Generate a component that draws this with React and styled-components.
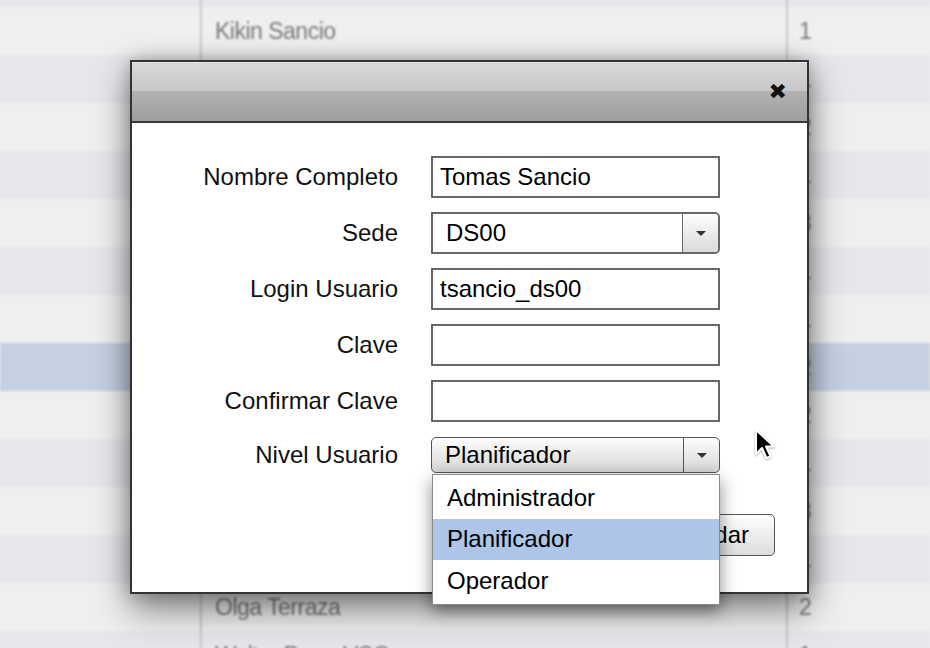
import React from 'react';
import styled, { createGlobalStyle } from 'styled-components';

const GlobalStyle = createGlobalStyle`
  html, body {
    margin: 0;
    padding: 0;
    background: #efefef;
  }
  * {
    box-sizing: border-box;
  }
  body {
    font-family: "Liberation Sans", Arial, Helvetica, sans-serif;
  }
`;

const rows = [
  { name: '', num: '' },
  { name: 'Kikin Sancio', num: '1' },
  { name: 'Ana Beltran', num: '1' },
  { name: 'Carlos Rivas', num: '2' },
  { name: 'Diego Torres', num: '1' },
  { name: 'Elena Campos', num: '3' },
  { name: 'Fabian Mejia', num: '1' },
  { name: 'Gloria Paz', num: '1' },
  { name: 'Tomas Sancio', num: '2', selected: true },
  { name: 'Hugo Salas', num: '2' },
  { name: 'Ines Rojas', num: '1' },
  { name: 'Jorge Vera', num: '3' },
  { name: 'Luis Ortega', num: '1' },
  { name: 'Olga Terraza', num: '2' },
  { name: 'Walter Parra VSC', num: '1' },
];

const fields = [
  { label: 'Nombre Completo', kind: 'input', value: 'Tomas Sancio' },
  { label: 'Sede', kind: 'combo', value: 'DS00' },
  { label: 'Login Usuario', kind: 'input', value: 'tsancio_ds00' },
  { label: 'Clave', kind: 'input', value: '' },
  { label: 'Confirmar Clave', kind: 'input', value: '' },
];

const niveles = ['Administrador', 'Planificador', 'Operador'];

const Arrow = () => (
  <svg width="10" height="5" viewBox="0 0 10 5">
    <path d="M0 0 H10 L5 5 Z" fill="#333" />
  </svg>
);

const App = () => (
  <Screen>
    <GlobalStyle />
    <Table>
      {rows.map((r, i) => (
        <Row key={i} $alt={i % 2 === 0} $selected={r.selected}>
          <Cell $w={202} />
          <Cell $w={586}>{r.name}</Cell>
          <Cell $w={142} $last>
            {r.num}
          </Cell>
        </Row>
      ))}
    </Table>

    <Dialog>
      <Header>
        <Close>✖</Close>
      </Header>
      <Body>
        <Form>
          {fields.map((f) => (
            <React.Fragment key={f.label}>
              <Label>{f.label}</Label>
              {f.kind === 'input' ? (
                <TextBox>{f.value}</TextBox>
              ) : (
                <Combo>
                  <ComboText>{f.value}</ComboText>
                  <ComboButton>
                    <Arrow />
                  </ComboButton>
                </Combo>
              )}
            </React.Fragment>
          ))}
          <Label>Nivel Usuario</Label>
          <SelectWrap>
            <Select>
              <SelectText>Planificador</SelectText>
              <SelectButton>
                <Arrow />
              </SelectButton>
            </Select>
            <Menu>
              {niveles.map((n) => (
                <MenuItem key={n} $active={n === 'Planificador'}>
                  {n}
                </MenuItem>
              ))}
            </Menu>
          </SelectWrap>
        </Form>
        <Actions>
          <Button>Guardar</Button>
        </Actions>
      </Body>
    </Dialog>

    <Cursor>
      <svg width="22" height="34" viewBox="0 0 22 34">
        <path
          d="M2 2 L2 26 L8 20 L12.5 30 L16.5 28.3 L12 18.5 L20 18.5 Z"
          fill="#000"
          stroke="#fff"
          strokeWidth="2"
          strokeLinejoin="round"
        />
      </svg>
    </Cursor>
  </Screen>
);

const Screen = styled.div`
  position: relative;
  width: 930px;
  height: 648px;
  overflow: hidden;
  background: #efefef;
`;

const Table = styled.div`
  display: flex;
  flex-direction: column;
  margin-top: -41px;
  filter: blur(1px);
`;

const Row = styled.div`
  display: flex;
  height: 48px;
  flex: none;
  background: ${(p) => (p.$selected ? '#c5d0e2' : p.$alt ? '#e6e7eb' : '#efefef')};
`;

const Cell = styled.div`
  width: ${(p) => p.$w}px;
  flex: none;
  display: flex;
  align-items: center;
  padding-left: ${(p) => (p.$last ? 11 : 13)}px;
  font-size: 23px;
  letter-spacing: -0.5px;
  color: #7a7a7a;
  border-right: ${(p) => (p.$last ? 'none' : '2px solid #c9c9c9')};
`;

const Dialog = styled.div`
  position: absolute;
  left: 130px;
  top: 60px;
  width: 679px;
  height: 534px;
  background: #fff;
  border: 2px solid #333;
  box-shadow: 0 16px 34px rgba(0, 0, 0, 0.45), 0 0 18px rgba(0, 0, 0, 0.25);
  display: flex;
  flex-direction: column;
`;

const Header = styled.div`
  height: 61px;
  flex: none;
  display: flex;
  align-items: center;
  justify-content: flex-end;
  padding-right: 20px;
  border-bottom: 2px solid #383838;
  border-top: 1px solid #e4e4e4;
  background: linear-gradient(
    to bottom,
    #d8d8d8 0%,
    #c8c8c8 48%,
    #b2b2b2 48%,
    #9e9e9e 100%
  );
`;

const Close = styled.span`
  font-size: 22px;
  font-weight: bold;
  line-height: 1;
  color: #111;
  font-family: "DejaVu Sans", sans-serif;
`;

const Body = styled.div`
  flex: 1;
  display: flex;
  flex-direction: column;
  padding: 33px 32px 0 0;
`;

const Form = styled.div`
  display: grid;
  grid-template-columns: 266px 289px;
  column-gap: 33px;
  row-gap: 14px;
  align-items: center;
`;

const Label = styled.div`
  text-align: right;
  font-size: 24px;
  color: #111;
`;

const TextBox = styled.div`
  height: 42px;
  border: 2px solid #676767;
  background: #fff;
  padding-left: 7px;
  display: flex;
  align-items: center;
  font-size: 24px;
  color: #000;
`;

const Combo = styled.div`
  height: 42px;
  display: flex;
  border: 2px solid #676767;
  border-radius: 0 5px 5px 0;
  background: #fff;
  overflow: hidden;
`;

const ComboText = styled.div`
  flex: 1;
  display: flex;
  align-items: center;
  padding-left: 13px;
  font-size: 24px;
  color: #000;
`;

const ComboButton = styled.div`
  width: 36px;
  display: flex;
  align-items: center;
  justify-content: center;
  border-left: 1px solid #6a6a6a;
  background: linear-gradient(to bottom, #fdfdfd, #dadada);
`;

const SelectWrap = styled.div`
  position: relative;
  margin-top: 1px;
`;

const Select = styled.div`
  height: 36px;
  display: flex;
  border: 1.5px solid #555;
  border-radius: 5px;
  background: linear-gradient(to bottom, #fdfdfd, #d6d6d6);
  overflow: hidden;
`;

const SelectText = styled.div`
  flex: 1;
  display: flex;
  align-items: center;
  padding-left: 13px;
  font-size: 24px;
  color: #000;
`;

const SelectButton = styled.div`
  width: 36px;
  display: flex;
  align-items: center;
  justify-content: center;
  border-left: 1px solid #555;
`;

const Menu = styled.div`
  position: absolute;
  left: 1px;
  top: 37px;
  width: 288px;
  padding: 2px 0;
  background: #fff;
  border: 1px solid #8a8a8a;
  box-shadow: 0 6px 16px rgba(0, 0, 0, 0.45);
  z-index: 2;
`;

const MenuItem = styled.div`
  height: 41.5px;
  display: flex;
  align-items: center;
  padding-left: 14px;
  font-size: 24px;
  color: #000;
  background: ${(p) => (p.$active ? '#adc6e8' : '#fff')};
`;

const Actions = styled.div`
  display: flex;
  justify-content: flex-end;
  margin-top: 41px;
`;

const Button = styled.div`
  width: 140px;
  height: 42px;
  display: flex;
  align-items: center;
  justify-content: center;
  font-size: 24px;
  color: #000;
  border: 1.5px solid #555;
  border-radius: 5px;
  background: linear-gradient(to bottom, #ffffff, #dcdcdc);
`;

const Cursor = styled.div`
  position: absolute;
  left: 754px;
  top: 428px;
  width: 22px;
  height: 34px;
  filter: drop-shadow(0 1px 1px rgba(0, 0, 0, 0.3));
`;

export default App;
